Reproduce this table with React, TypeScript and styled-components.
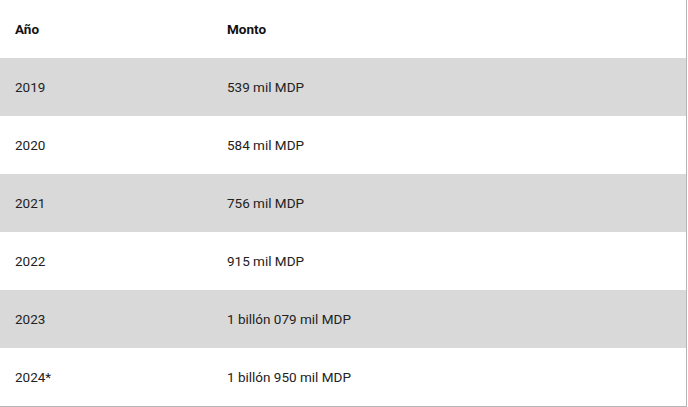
import styled, { createGlobalStyle } from "styled-components";

const Global = createGlobalStyle`
  body {
    margin: 0;
    background: #ffffff;
    font-family: Roboto, "Liberation Sans", sans-serif;
  }
`;

const Table = styled.div`
  width: 686px;
  border-right: 1px solid #b5b5b5;
  border-bottom: 1px solid #b5b5b5;
`;

const Row = styled.div<{ $shaded?: boolean }>`
  height: 58px;
  display: grid;
  grid-template-columns: 212px 1fr;
  align-items: center;
  padding-left: 15px;
  background: ${(p) => (p.$shaded ? "#d9d9d9" : "#ffffff")};
`;

const Cell = styled.div<{ $head?: boolean }>`
  font-size: 13.5px;
  font-weight: ${(p) => (p.$head ? 700 : 400)};
  color: ${(p) => (p.$head ? "#111111" : "#222222")};
`;

const rows = [
  ["2019", "539 mil MDP"],
  ["2020", "584 mil MDP"],
  ["2021", "756 mil MDP"],
  ["2022", "915 mil MDP"],
  ["2023", "1 billón 079 mil MDP"],
  ["2024*", "1 billón 950 mil MDP"],
];

export default function App() {
  return (
    <>
      <Global />
      <Table>
        <Row>
          <Cell $head>Año</Cell>
          <Cell $head>Monto</Cell>
        </Row>
        {rows.map(([year, amount], i) => (
          <Row key={year} $shaded={i % 2 === 0}>
            <Cell>{year}</Cell>
            <Cell>{amount}</Cell>
          </Row>
        ))}
      </Table>
    </>
  );
}
